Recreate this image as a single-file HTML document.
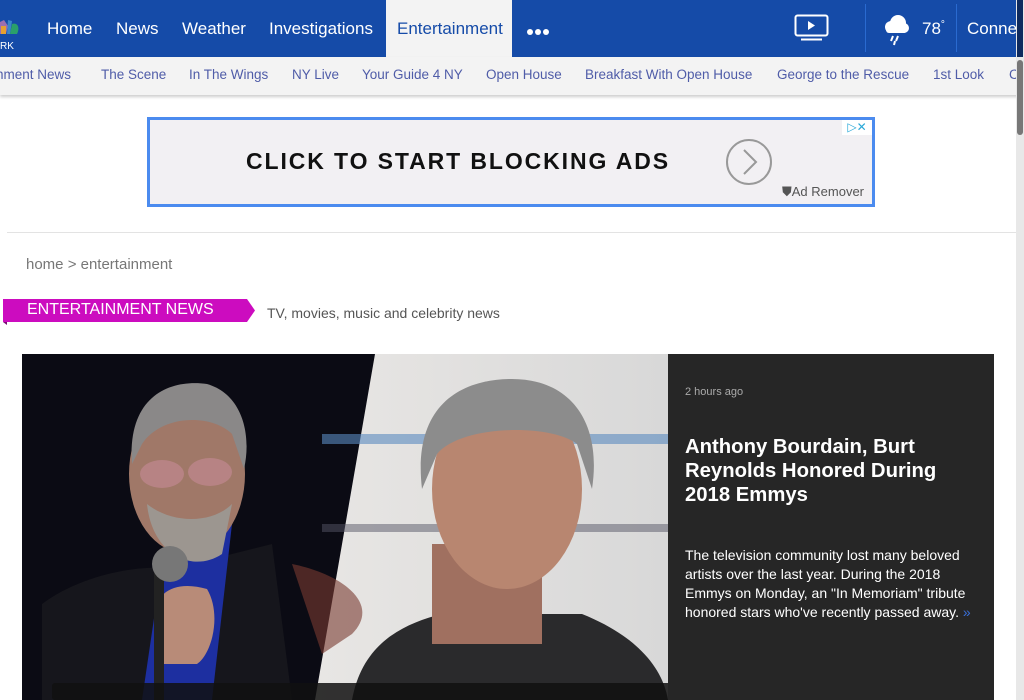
<!DOCTYPE html>
<html><head><meta charset="utf-8"><style>
*{margin:0;padding:0;box-sizing:border-box}
body{width:1024px;height:700px;overflow:hidden;background:#fff;font-family:"Liberation Sans",sans-serif;position:relative}
.nav{position:absolute;left:0;top:0;width:1024px;height:57px;background:#154ba8}
.nav a{position:absolute;top:19px;color:#fff;font-size:17px;text-decoration:none}
.ent{position:absolute;left:386px;top:0;width:126px;height:57px;background:#f3f3f3;color:#154ba8;font-size:17px;padding:19px 0 0 11px}
.sub{position:absolute;left:0;top:57px;width:1024px;height:38px;background:#f3f3f3;box-shadow:0 2px 3px rgba(0,0,0,.2)}
.sub span{position:absolute;top:10px;font-size:13.5px;color:#4f5ca8}
.ad{position:absolute;left:147px;top:117px;width:728px;height:90px;border:3px solid #4b8bef;background:#f2f0f3}
.sb{position:absolute;right:0;top:0;width:8px;height:700px;background:#e8e8e8}
</style></head><body>
<div class="nav">
<svg style="position:absolute;left:0;top:18px" width="22" height="36" viewBox="0 0 22 36"><path d="M0 4 L4 2 L8 8 L6 16 L0 16Z" fill="#9b6fb0"/><path d="M8 2 L12 3 L10 16 L7 16Z" fill="#3a86c8"/><path d="M12 6 C18 4 20 10 17 16 L10 16Z" fill="#2aa06a"/><path d="M1 8 L6 8 L6 16 L1 16Z" fill="#e6a030"/><text x="0" y="31" font-size="10" fill="#fff" font-family="Liberation Sans">RK</text></svg>
<a style="left:47px">Home</a><a style="left:116px">News</a><a style="left:182px">Weather</a><a style="left:269px">Investigations</a>
<div class="ent">Entertainment</div>
<svg style="position:absolute;left:526px;top:28px" width="24" height="8"><circle cx="4" cy="4" r="3" fill="#fff"/><circle cx="12" cy="4" r="3" fill="#fff"/><circle cx="20" cy="4" r="3" fill="#fff"/></svg>
<svg style="position:absolute;left:794px;top:14px" width="36" height="28"><rect x="1.5" y="1.5" width="32" height="20" rx="2" fill="none" stroke="#fff" stroke-width="2"/><path d="M14 7 L21 11.5 L14 16Z" fill="#fff"/><line x1="7" y1="25.5" x2="28" y2="25.5" stroke="#fff" stroke-width="2"/></svg>
<div style="position:absolute;left:865px;top:4px;width:1px;height:48px;background:#2a6ad0"></div>
<svg style="position:absolute;left:880px;top:14px" width="32" height="32"><circle cx="11" cy="13" r="6" fill="#fff"/><circle cx="18" cy="9" r="8" fill="#fff"/><circle cx="24" cy="14" r="5" fill="#fff"/><rect x="6" y="12" width="21" height="7" rx="3" fill="#fff"/><path d="M13 22 L11 27 M18 22 L16 27 M15 27 L14 31" stroke="#fff" stroke-width="2"/></svg>
<a style="left:922px">78<sup style="font-size:10px">°</sup></a>
<div style="position:absolute;left:956px;top:4px;width:1px;height:48px;background:#2a6ad0"></div>
<a style="left:967px">Connect</a>
</div>
<div class="sub">
<span style="left:-4px">nment News</span><span style="left:101px">The Scene</span><span style="left:189px">In The Wings</span><span style="left:292px">NY Live</span><span style="left:362px">Your Guide 4 NY</span><span style="left:486px">Open House</span><span style="left:585px">Breakfast With Open House</span><span style="left:777px">George to the Rescue</span><span style="left:933px">1st Look</span><span style="left:1009px">CO</span>
</div>
<div class="ad">
<div style="position:absolute;left:96px;top:28px;font-size:23px;font-weight:bold;letter-spacing:1.9px;color:#111">CLICK TO START BLOCKING ADS</div>
<svg style="position:absolute;left:575px;top:18px" width="48" height="48"><circle cx="24" cy="24" r="22" fill="none" stroke="#999" stroke-width="2"/><path d="M19 12 L31 24 L19 36" fill="none" stroke="#999" stroke-width="2"/></svg>
<div style="position:absolute;left:632px;top:64px;font-size:13px;color:#555">⛊Ad Remover</div>
<div style="position:absolute;right:0;top:0;width:30px;height:15px;background:#fff;color:#29a8d8;font-size:12px;line-height:14px;text-align:center">▷✕</div>
</div>
<div style="position:absolute;left:7px;top:232px;width:1010px;height:1px;background:#e3e3e3"></div>
<div style="position:absolute;left:26px;top:256px;font-size:15px;color:#777">home &gt; entertainment</div>
<svg style="position:absolute;left:3px;top:298px" width="256" height="28"><path d="M0 1 L244 1 L252 12.5 L244 24 L0 24Z" fill="#cc0cbf"/><path d="M0 24 L4 24 L4 27Z" fill="#7a0a72"/></svg>
<div style="position:absolute;left:27px;top:301px;font-size:16px;color:#fff">ENTERTAINMENT NEWS</div>
<div style="position:absolute;left:267px;top:305px;font-size:14px;color:#555">TV, movies, music and celebrity news</div>
<svg style="position:absolute;left:22px;top:354px" width="646" height="346" viewBox="0 0 646 346">
<defs><linearGradient id="bg2" x1="0" x2="1"><stop offset="0" stop-color="#e8e6e4"/><stop offset="1" stop-color="#d8d8d8"/></linearGradient></defs>
<rect width="646" height="346" fill="#0b0b14"/>
<path d="M353 0 L646 0 L646 346 L293 346Z" fill="url(#bg2)"/>
<rect x="300" y="80" width="346" height="10" fill="#5a8ac0" opacity=".6"/>
<rect x="300" y="170" width="346" height="8" fill="#556" opacity=".5"/>
<path d="M270 210 C320 220 360 250 330 280 L300 300Z" fill="#7a3a30" opacity=".6"/>
<path d="M20 250 C60 220 120 210 150 215 L250 190 L270 346 L20 346Z" fill="#16161c"/>
<path d="M140 210 L210 170 L190 346 L120 346Z" fill="#1d2fa0"/>
<ellipse cx="165" cy="120" rx="58" ry="80" fill="#a07868"/>
<path d="M110 110 C105 40 150 25 185 30 C220 40 230 80 222 115 L210 80 C190 60 140 60 120 90Z" fill="#8a8888"/>
<path d="M125 150 C130 200 170 220 200 200 L210 150 C190 170 150 170 125 150Z" fill="#9c9690"/>
<ellipse cx="140" cy="120" rx="22" ry="14" fill="#c08890" opacity=".7"/><ellipse cx="188" cy="118" rx="22" ry="14" fill="#c08890" opacity=".7"/>
<path d="M135 280 C125 240 150 225 185 235 C200 260 190 300 175 310 L140 310Z" fill="#b88b78"/>
<rect x="132" y="210" width="10" height="136" fill="#222"/><ellipse cx="148" cy="210" rx="18" ry="18" fill="#777"/>
<path d="M330 346 C340 290 380 270 420 260 L560 260 C610 280 640 310 646 346Z" fill="#2a2a2c"/>
<path d="M410 190 L410 290 L520 290 L520 190Z" fill="#a07060"/>
<ellipse cx="485" cy="135" rx="75" ry="100" fill="#b88670"/>
<path d="M400 135 C390 50 440 25 490 25 C550 25 580 70 570 135 L555 90 C530 70 440 70 415 100Z" fill="#8c8c8c"/>
<rect x="30" y="329" width="908" height="17" rx="3" fill="#111" opacity=".85"/>
</svg>
<div style="position:absolute;left:668px;top:354px;width:326px;height:346px;background:#262626;color:#fff">
<div style="position:absolute;left:17px;top:32px;font-size:11px;color:#aaa">2 hours ago</div>
<div style="position:absolute;left:17px;top:81px;width:290px;font-size:20.3px;font-weight:bold;line-height:24px">Anthony Bourdain, Burt Reynolds Honored During 2018 Emmys</div>
<div style="position:absolute;left:17px;top:192px;width:295px;font-size:14px;line-height:19px">The television community lost many beloved artists over the last year. During the 2018 Emmys on Monday, an "In Memoriam" tribute honored stars who've recently passed away. <span style="color:#3a6fd8">»</span></div>
</div>
<div class="sb"><div style="position:absolute;left:1px;top:0;width:6px;height:57px;background:#0e2a5e"></div><div style="position:absolute;left:1px;top:60px;width:6px;height:75px;background:#777;border-radius:3px"></div></div>
</body></html>
